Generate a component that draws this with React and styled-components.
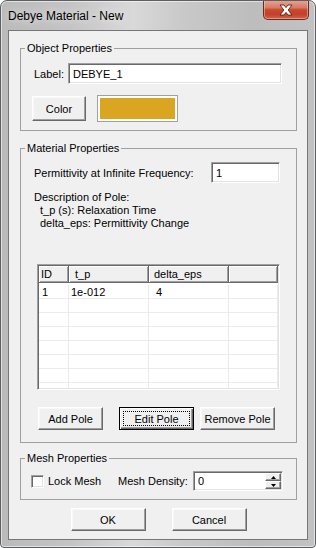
import React from 'react';
import styled, { createGlobalStyle } from 'styled-components';

const GlobalStyle = createGlobalStyle`
  html, body {
    margin: 0;
    padding: 0;
    background: #ffffff;
  }
  body {
    font-family: "Liberation Sans", Arial, sans-serif;
    font-size: 11px;
    color: #000;
  }
`;

const Window = styled.div`
  width: 316px;
  height: 548px;
  box-sizing: border-box;
  display: flex;
  flex-direction: column;
  border: 1px solid #5c6064;
  border-radius: 7px 7px 4px 4px;
  background: linear-gradient(90deg, #bababa 0%, #c4c4c4 22%, #d9d9d9 42%, #c9c9c9 58%, #bdbdbd 80%, #c2c2c2 100%);
  box-shadow: inset 0 0 0 1px rgba(255, 255, 255, 0.55);
  overflow: hidden;
`;

const TitleBar = styled.div`
  height: 29px;
  flex-shrink: 0;
  display: flex;
  justify-content: space-between;
  align-items: flex-start;
  padding: 0 6px 0 7px;
`;

const Title = styled.div`
  margin-top: 8px;
  font-size: 12px;
  color: #000;
  text-shadow: 0 0 8px rgba(255, 255, 255, 0.9);
`;

const CloseButton = styled.div`
  width: 46px;
  height: 20px;
  margin-top: -1px;
  box-sizing: border-box;
  display: flex;
  align-items: center;
  justify-content: center;
  border: 1px solid #6b2a1f;
  border-top: none;
  border-radius: 0 0 5px 5px;
  background: linear-gradient(180deg, #e6a897 0%, #d97a64 40%, #c8472f 52%, #c2412a 75%, #d0634a 100%);
  box-shadow: inset 0 0 0 1px rgba(255, 220, 210, 0.45);
`;

const Client = styled.div`
  flex: 1;
  margin: 0 7px 7px 7px;
  display: flex;
  flex-direction: column;
  background: #f0f0f0;
  border: 1px solid #767676;
  padding: 0 10px 0 11px;
`;

const Group = styled.fieldset`
  margin: ${p => p.$top}px 0 0 0;
  padding: ${p => p.$pad};
  border: 1px solid #a0a0a0;
  min-width: 0;
`;

const Legend = styled.legend`
  padding: 0 2px;
  margin-left: -7px;
  line-height: 13px;
  font-size: 11px;
`;

const LabelRow = styled.div`
  display: flex;
  align-items: center;
  gap: 4px;
  padding-left: 2px;
`;

const FieldRow = styled.div`
  display: grid;
  grid-template-columns: 177px 69px;
  align-items: center;
  padding-left: 2px;
`;

const TextBox = styled.div`
  width: ${p => p.$w}px;
  height: ${p => p.$h}px;
  box-sizing: border-box;
  display: flex;
  align-items: center;
  padding: 0 3px;
  background: #fff;
  border: 1px solid;
  border-color: #a0a0a0 #ffffff #ffffff #a0a0a0;
  box-shadow: inset 1px 1px #696969, inset -1px -1px #e3e3e3;
`;

const TextValue = styled.span`
  flex: 1;
  padding-left: 1px;
`;

const ColorRow = styled.div`
  display: flex;
  align-items: center;
  gap: 11px;
  margin-top: 11px;
`;

const Swatch = styled.div`
  width: 81px;
  height: 27px;
  box-sizing: border-box;
  border: 1px solid #a0a0a0;
  padding: 2px;
  background: #ffffff;
`;

const SwatchFill = styled.div`
  width: 100%;
  height: 100%;
  background: ${p => p.$color};
`;

const Button = styled.div`
  width: ${p => p.$w}px;
  height: ${p => p.$h || 23}px;
  margin-left: ${p => p.$ml || 0}px;
  box-sizing: border-box;
  padding: 3px;
  background: #f0f0f0;
  border: 1px solid;
  border-color: ${p => (p.$default ? '#000 #000 #000 #000' : '#ffffff #696969 #696969 #ffffff')};
  box-shadow: ${p =>
    p.$default
      ? 'inset 1px 1px #ffffff, inset -1px -1px #696969, inset -2px -2px #a0a0a0'
      : 'inset -1px -1px #a0a0a0, inset 1px 1px #f8f8f8'};
`;

const ButtonFace = styled.span`
  display: flex;
  height: 100%;
  box-sizing: border-box;
  align-items: center;
  justify-content: center;
  white-space: nowrap;
  border: 1px dotted ${p => (p.$focus ? '#000' : 'transparent')};
`;

const Description = styled.div`
  margin-top: 8px;
  padding-left: 2px;
  line-height: 13px;
`;

const DescLine = styled.div`
  padding-left: ${p => (p.$indent ? 6 : 0)}px;
`;

const Grid = styled.div`
  width: 243px;
  height: 126px;
  box-sizing: border-box;
  margin: 34px 0 0 5px;
  padding: 1px;
  background: #fff;
  border: 1px solid;
  border-color: #a0a0a0 #ffffff #ffffff #a0a0a0;
  box-shadow: inset 1px 1px #696969, inset -1px -1px #e3e3e3;
  overflow: hidden;
`;

const GridRow = styled.div`
  display: grid;
  grid-template-columns: 30px 80px 80px 1fr;
`;

const HeadCell = styled.div`
  height: 17px;
  box-sizing: border-box;
  line-height: 16px;
  padding-left: ${p => p.$pad}px;
  background: #f0f0f0;
  border-right: 1px solid #696969;
  border-bottom: 1px solid #696969;
  box-shadow: inset 1px 1px #ffffff, inset -1px -1px #a0a0a0;
  white-space: nowrap;
`;

const Body = styled.div`
  padding-top: 2px;
`;

const Cell = styled.div`
  height: 14px;
  box-sizing: border-box;
  line-height: 14px;
  padding-left: ${p => p.$pad}px;
  border-right: 1px solid #ebebeb;
  border-bottom: 1px solid #ebebeb;
  white-space: nowrap;
`;

const PoleButtons = styled.div`
  display: flex;
  margin-top: 17px;
  padding-left: 6px;
`;

const MeshRow = styled.div`
  display: grid;
  grid-template-columns: 86px 75px 90px;
  align-items: center;
`;

const CheckWrap = styled.div`
  display: flex;
  align-items: center;
  gap: 4px;
  margin-left: -1px;
`;

const CheckBox = styled.div`
  width: 13px;
  height: 13px;
  box-sizing: border-box;
  background: #fff;
  border: 1px solid;
  border-color: #a0a0a0 #ffffff #ffffff #a0a0a0;
  box-shadow: inset 1px 1px #696969, inset -1px -1px #e3e3e3;
`;

const SpinButtons = styled.div`
  width: 16px;
  height: 16px;
  margin-right: -2px;
  display: flex;
  flex-direction: column;
`;

const SpinHalf = styled.div`
  flex: 1;
  display: flex;
  align-items: center;
  justify-content: center;
  background: #f0f0f0;
  border: 1px solid;
  border-color: #ffffff #696969 #696969 #ffffff;
  box-shadow: inset -1px -1px #a0a0a0;
`;

const DialogButtons = styled.div`
  display: flex;
  justify-content: center;
  gap: 26px;
  margin-top: 8px;
`;

const columns = [
  { name: 'ID', head: 2, body: 3 },
  { name: 't_p', head: 6, body: 2 },
  { name: 'delta_eps', head: 5, body: 7 },
  { name: '', head: 4, body: 4 },
];

const rows = [['1', '1e-012', '4', '']];
while (rows.length < 8) rows.push(['', '', '', '']);

const Arrow = ({ up }) => (
  <svg width="5" height="3" viewBox="0 0 5 3">
    <path d={up ? 'M2.5 0 L5 3 L0 3 Z' : 'M0 0 L5 0 L2.5 3 Z'} fill="#000" />
  </svg>
);

const CloseGlyph = () => (
  <svg width="14" height="12" viewBox="0 0 14 12">
    <path
      d="M1 1 L5 1 L7 3.6 L9 1 L13 1 L9.2 6 L13 11 L9 11 L7 8.4 L5 11 L1 11 L4.8 6 Z"
      fill="#ffffff"
      stroke="#5a1f15"
      strokeWidth="0.9"
      strokeLinejoin="round"
    />
  </svg>
);

const PushButton = ({ label, w, h, ml, isDefault }) => (
  <Button $w={w} $h={h} $ml={ml} $default={isDefault}>
    <ButtonFace $focus={isDefault}>{label}</ButtonFace>
  </Button>
);

const App = () => (
  <>
    <GlobalStyle />
    <Window>
      <TitleBar>
        <Title>Debye Material - New</Title>
        <CloseButton>
          <CloseGlyph />
        </CloseButton>
      </TitleBar>
      <Client>
        <Group $top={11} $pad="8px 14px 8px 11px">
          <Legend>Object Properties</Legend>
          <LabelRow>
            <span>Label:</span>
            <TextBox $w={215} $h={21}>
              <TextValue>DEBYE_1</TextValue>
            </TextBox>
          </LabelRow>
          <ColorRow>
            <PushButton label="Color" w={54} h={25} />
            <Swatch>
              <SwatchFill $color="#daa520" />
            </Swatch>
          </ColorRow>
        </Group>

        <Group $top={11} $pad="7px 14px 12px 11px">
          <Legend>Material Properties</Legend>
          <FieldRow>
            <span>Permittivity at Infinite Frequency:</span>
            <TextBox $w={69} $h={21}>
              <TextValue>1</TextValue>
            </TextBox>
          </FieldRow>
          <Description>
            <DescLine>Description of Pole:</DescLine>
            <DescLine $indent>t_p (s): Relaxation Time</DescLine>
            <DescLine $indent>delta_eps: Permittivity Change</DescLine>
          </Description>
          <Grid>
            <GridRow>
              {columns.map((c, i) => (
                <HeadCell key={i} $pad={c.head}>{c.name}</HeadCell>
              ))}
            </GridRow>
            <Body>
              {rows.map((r, ri) => (
                <GridRow key={ri}>
                  {r.map((v, ci) => (
                    <Cell key={ci} $pad={columns[ci].body}>{v}</Cell>
                  ))}
                </GridRow>
              ))}
            </Body>
          </Grid>
          <PoleButtons>
            <PushButton label="Add Pole" w={65} />
            <PushButton label="Edit Pole" w={75} ml={16} isDefault />
            <PushButton label="Remove Pole" w={75} ml={6} />
          </PoleButtons>
        </Group>

        <Group $top={9} $pad="6px 14px 8px 11px">
          <Legend>Mesh Properties</Legend>
          <MeshRow>
            <CheckWrap>
              <CheckBox />
              <span>Lock Mesh</span>
            </CheckWrap>
            <span>Mesh Density:</span>
            <TextBox $w={90} $h={20}>
              <TextValue>0</TextValue>
              <SpinButtons>
                <SpinHalf><Arrow up /></SpinHalf>
                <SpinHalf><Arrow /></SpinHalf>
              </SpinButtons>
            </TextBox>
          </MeshRow>
        </Group>

        <DialogButtons>
          <PushButton label="OK" w={75} />
          <PushButton label="Cancel" w={75} />
        </DialogButtons>
      </Client>
    </Window>
  </>
);

export default App;
